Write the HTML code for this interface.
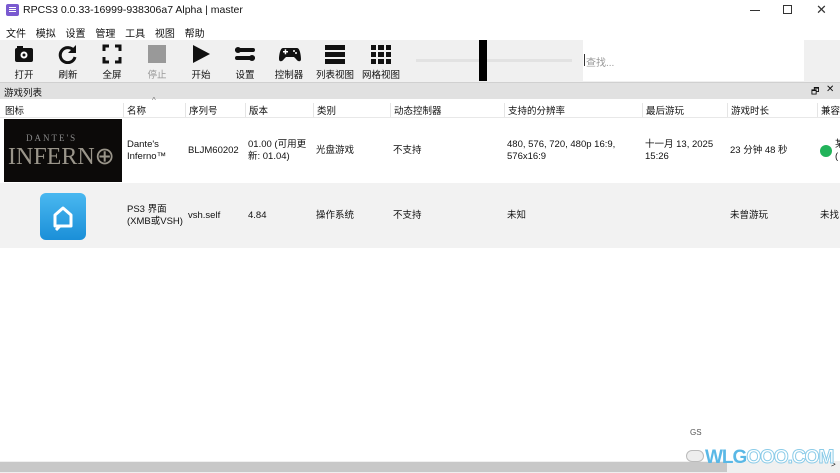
<!DOCTYPE html>
<html><head><meta charset="utf-8"><style>
*{margin:0;padding:0;box-sizing:border-box}
body{width:840px;height:473px;overflow:hidden;background:#fff;font-family:"Liberation Sans","Noto Sans CJK SC",sans-serif;font-size:9.5px;color:#111;position:relative}
.a{position:absolute;white-space:nowrap}
.tb{top:40px;left:0;width:840px;height:42px;background:#f0f0f0}
.btn{position:absolute;top:0;width:44px;height:42px;text-align:center}
.btn svg{position:absolute;left:12px;top:4px}
.btn span{position:absolute;left:0;right:0;top:27px;font-size:9.5px}
.hd{top:99px;height:19px;background:#fff;width:840px;border-bottom:1px solid #e8e8e8}
.hd .c{position:absolute;top:4px;height:14px;border-left:1px solid #e5e5e5;padding-left:3px}
.cell{position:absolute;line-height:12px}
</style></head><body>
<div class="a" style="left:6px;top:4px;width:13px;height:12px;background:#7a5ad0;border-radius:2px"></div>
<div class="a" style="left:9px;top:7px;width:7px;height:1px;background:#fff;box-shadow:0 2px #fff,0 4px #fff"></div>
<div class="a" style="left:23px;top:4px;font-size:10.5px">RPCS3 0.0.33-16999-938306a7 Alpha | master</div>
<div class="a" style="left:750px;top:10px;width:10px;height:1px;background:#333"></div>
<div class="a" style="left:783px;top:5px;width:9px;height:9px;border:1px solid #333"></div>
<div class="a" style="left:816px;top:2px;font-size:13px;color:#333">✕</div>
<div class="a" style="left:6px;top:25px;font-size:10px;word-spacing:7px">文件 模拟 设置 管理 工具 视图 帮助</div>
<div class="a tb">
 <div class="btn" style="left:2px"><svg width="20" height="20"><rect x="1" y="4" width="18" height="14" rx="2" fill="#111"/><rect x="3" y="2" width="6" height="3" fill="#111"/><circle cx="10" cy="11" r="3.5" fill="#fff"/><circle cx="10" cy="11" r="1.5" fill="#111"/></svg><span>打开</span></div>
 <div class="btn" style="left:46px"><svg width="20" height="20"><path d="M16 7A7.5 7.5 0 1 0 17 13" stroke="#111" stroke-width="3" fill="none"/><path d="M18 1v8h-8z" fill="#111"/></svg><span>刷新</span></div>
 <div class="btn" style="left:90px"><svg width="20" height="20" fill="none" stroke="#111" stroke-width="3"><path d="M2 7V2h5M13 2h5v5M18 13v5h-5M7 18H2v-5"/></svg><span>全屏</span></div>
 <div class="btn" style="left:135px"><svg width="20" height="20"><rect x="1" y="1" width="18" height="18" fill="#999"/></svg><span style="color:#999">停止</span></div>
 <div class="btn" style="left:179px"><svg width="20" height="20"><path d="M2 1l17 9-17 9z" fill="#111"/></svg><span>开始</span></div>
 <div class="btn" style="left:223px"><svg width="20" height="20"><rect x="0" y="4" width="20" height="4" rx="2" fill="#111"/><rect x="0" y="12" width="20" height="4" rx="2" fill="#111"/><circle cx="3" cy="6" r="3" fill="#111"/><circle cx="17" cy="14" r="3" fill="#111"/></svg><span>设置</span></div>
 <div class="btn" style="left:267px"><svg width="22" height="20"><path d="M4 4h14c3 0 4 8 4 11 0 3-3 3-5 0l-2-2H7l-2 2c-2 3-5 3-5 0 0-3 1-11 4-11z" fill="#111"/><rect x="4" y="7" width="5" height="1.5" fill="#fff"/><rect x="5.7" y="5.3" width="1.5" height="5" fill="#fff"/><circle cx="15" cy="7" r="1" fill="#fff"/><circle cx="17" cy="9" r="1" fill="#fff"/></svg><span>控制器</span></div>
 <div class="btn" style="left:313px"><svg width="20" height="20"><rect x="0" y="1" width="20" height="5" fill="#111"/><rect x="0" y="8" width="20" height="5" fill="#111"/><rect x="0" y="15" width="20" height="5" fill="#111"/></svg><span>列表视图</span></div>
 <div class="btn" style="left:359px"><svg width="20" height="20" fill="#111"><rect x="0" y="1" width="5" height="5"/><rect x="7" y="1" width="6" height="5"/><rect x="15" y="1" width="5" height="5"/><rect x="0" y="8" width="5" height="5"/><rect x="7" y="8" width="6" height="5"/><rect x="15" y="8" width="5" height="5"/><rect x="0" y="15" width="5" height="5"/><rect x="7" y="15" width="6" height="5"/><rect x="15" y="15" width="5" height="5"/></svg><span>网格视图</span></div>
 <div class="a" style="left:416px;top:19px;width:156px;height:3px;background:#e2e2e2"></div>
 <div class="a" style="left:479px;top:0;width:8px;height:41px;background:#000"></div>
 <div class="a" style="left:583px;top:0;width:221px;height:41px;background:#fff"></div>
 <div class="a" style="left:584px;top:14px;width:1px;height:12px;background:#333"></div>
 <div class="a" style="left:586px;top:14px;color:#999;font-size:10px">查找...</div>
</div>
<div class="a" style="top:82px;left:0;width:840px;height:17px;background:#e1e1e1;border-top:1px solid #d0d0d0"></div>
<div class="a" style="left:4px;top:85px;font-size:9.5px">游戏列表</div>
<div class="a" style="left:811px;top:84px;font-size:9px">🗗</div>
<div class="a" style="left:826px;top:84px;font-size:10px">✕</div>
<div class="a hd">
 <div class="c" style="left:0;border:0;padding-left:5px">图标</div>
 <div class="c" style="left:123px">名称</div>
 <div class="a" style="left:152px;top:-3px;font-size:8px;color:#777">^</div>
 <div class="c" style="left:185px">序列号</div>
 <div class="c" style="left:245px">版本</div>
 <div class="c" style="left:313px">类别</div>
 <div class="c" style="left:390px">动态控制器</div>
 <div class="c" style="left:504px">支持的分辨率</div>
 <div class="c" style="left:642px">最后游玩</div>
 <div class="c" style="left:727px">游戏时长</div>
 <div class="c" style="left:817px">兼容</div>
</div>
<div class="a" style="left:4px;top:119px;width:118px;height:63px;background:#0c0a09"></div>
<div class="a" style="left:26px;top:133px;font-family:'Liberation Serif',serif;font-size:9px;letter-spacing:2px;color:#888">DANTE'S</div>
<div class="a" style="left:8px;top:142px;font-family:'Liberation Serif',serif;font-size:24px;color:#9a958a">INFERN⊕</div>
<div class="cell" style="left:127px;top:139px">Dante's<br>Inferno™</div>
<div class="cell" style="left:188px;top:145px">BLJM60202</div>
<div class="cell" style="left:248px;top:139px">01.00 (可用更<br>新: 01.04)</div>
<div class="cell" style="left:316px;top:145px">光盘游戏</div>
<div class="cell" style="left:393px;top:145px">不支持</div>
<div class="cell" style="left:507px;top:139px">480, 576, 720, 480p 16:9,<br>576x16:9</div>
<div class="cell" style="left:645px;top:139px">十一月 13, 2025<br>15:26</div>
<div class="cell" style="left:730px;top:145px">23 分钟 48 秒</div>
<div class="a" style="left:820px;top:145px;width:12px;height:12px;border-radius:6px;background:#22b35a"></div>
<div class="cell" style="left:835px;top:139px">某<br>(</div>
<div class="a" style="left:0;top:183px;width:840px;height:65px;background:#f2f2f2"></div>
<div class="a" style="left:40px;top:193px;width:46px;height:47px;border-radius:6px;background:linear-gradient(#4ab8f0,#1b8fd8)"></div>
<svg class="a" style="left:40px;top:193px" width="46" height="47"><path d="M15 22l8-7 8 7v11H15z" fill="none" stroke="#fff" stroke-width="3" stroke-linejoin="round"/><path d="M20 33l-4 4" stroke="#fff" stroke-width="3"/></svg>
<div class="cell" style="left:127px;top:204px">PS3 界面<br>(XMB或VSH)</div>
<div class="cell" style="left:188px;top:210px">vsh.self</div>
<div class="cell" style="left:248px;top:210px">4.84</div>
<div class="cell" style="left:316px;top:210px">操作系统</div>
<div class="cell" style="left:393px;top:210px">不支持</div>
<div class="cell" style="left:507px;top:210px">未知</div>
<div class="cell" style="left:730px;top:210px">未曾游玩</div>
<div class="cell" style="left:820px;top:210px">未找</div>
<div class="a" style="left:0;top:461px;width:840px;height:12px;background:#f0f0f0"></div>
<div class="a" style="left:0;top:462px;width:727px;height:10px;background:#c8c8c8"></div>
<div class="a" style="left:831px;top:460px;font-size:8px">&gt;</div>
<div class="a" style="left:690px;top:428px;font-size:8px;color:#555">GS</div>
<div class="a" style="left:705px;top:447px;font-size:19px;font-weight:bold;color:#5ab8e6;letter-spacing:-1px">WLG<span style="color:#fff;-webkit-text-stroke:1px #8acbe8">OOO.COM</span></div>
<div class="a" style="left:686px;top:450px;width:18px;height:12px;border-radius:6px;background:#eee;border:1px solid #bbb"></div>
</body></html>
